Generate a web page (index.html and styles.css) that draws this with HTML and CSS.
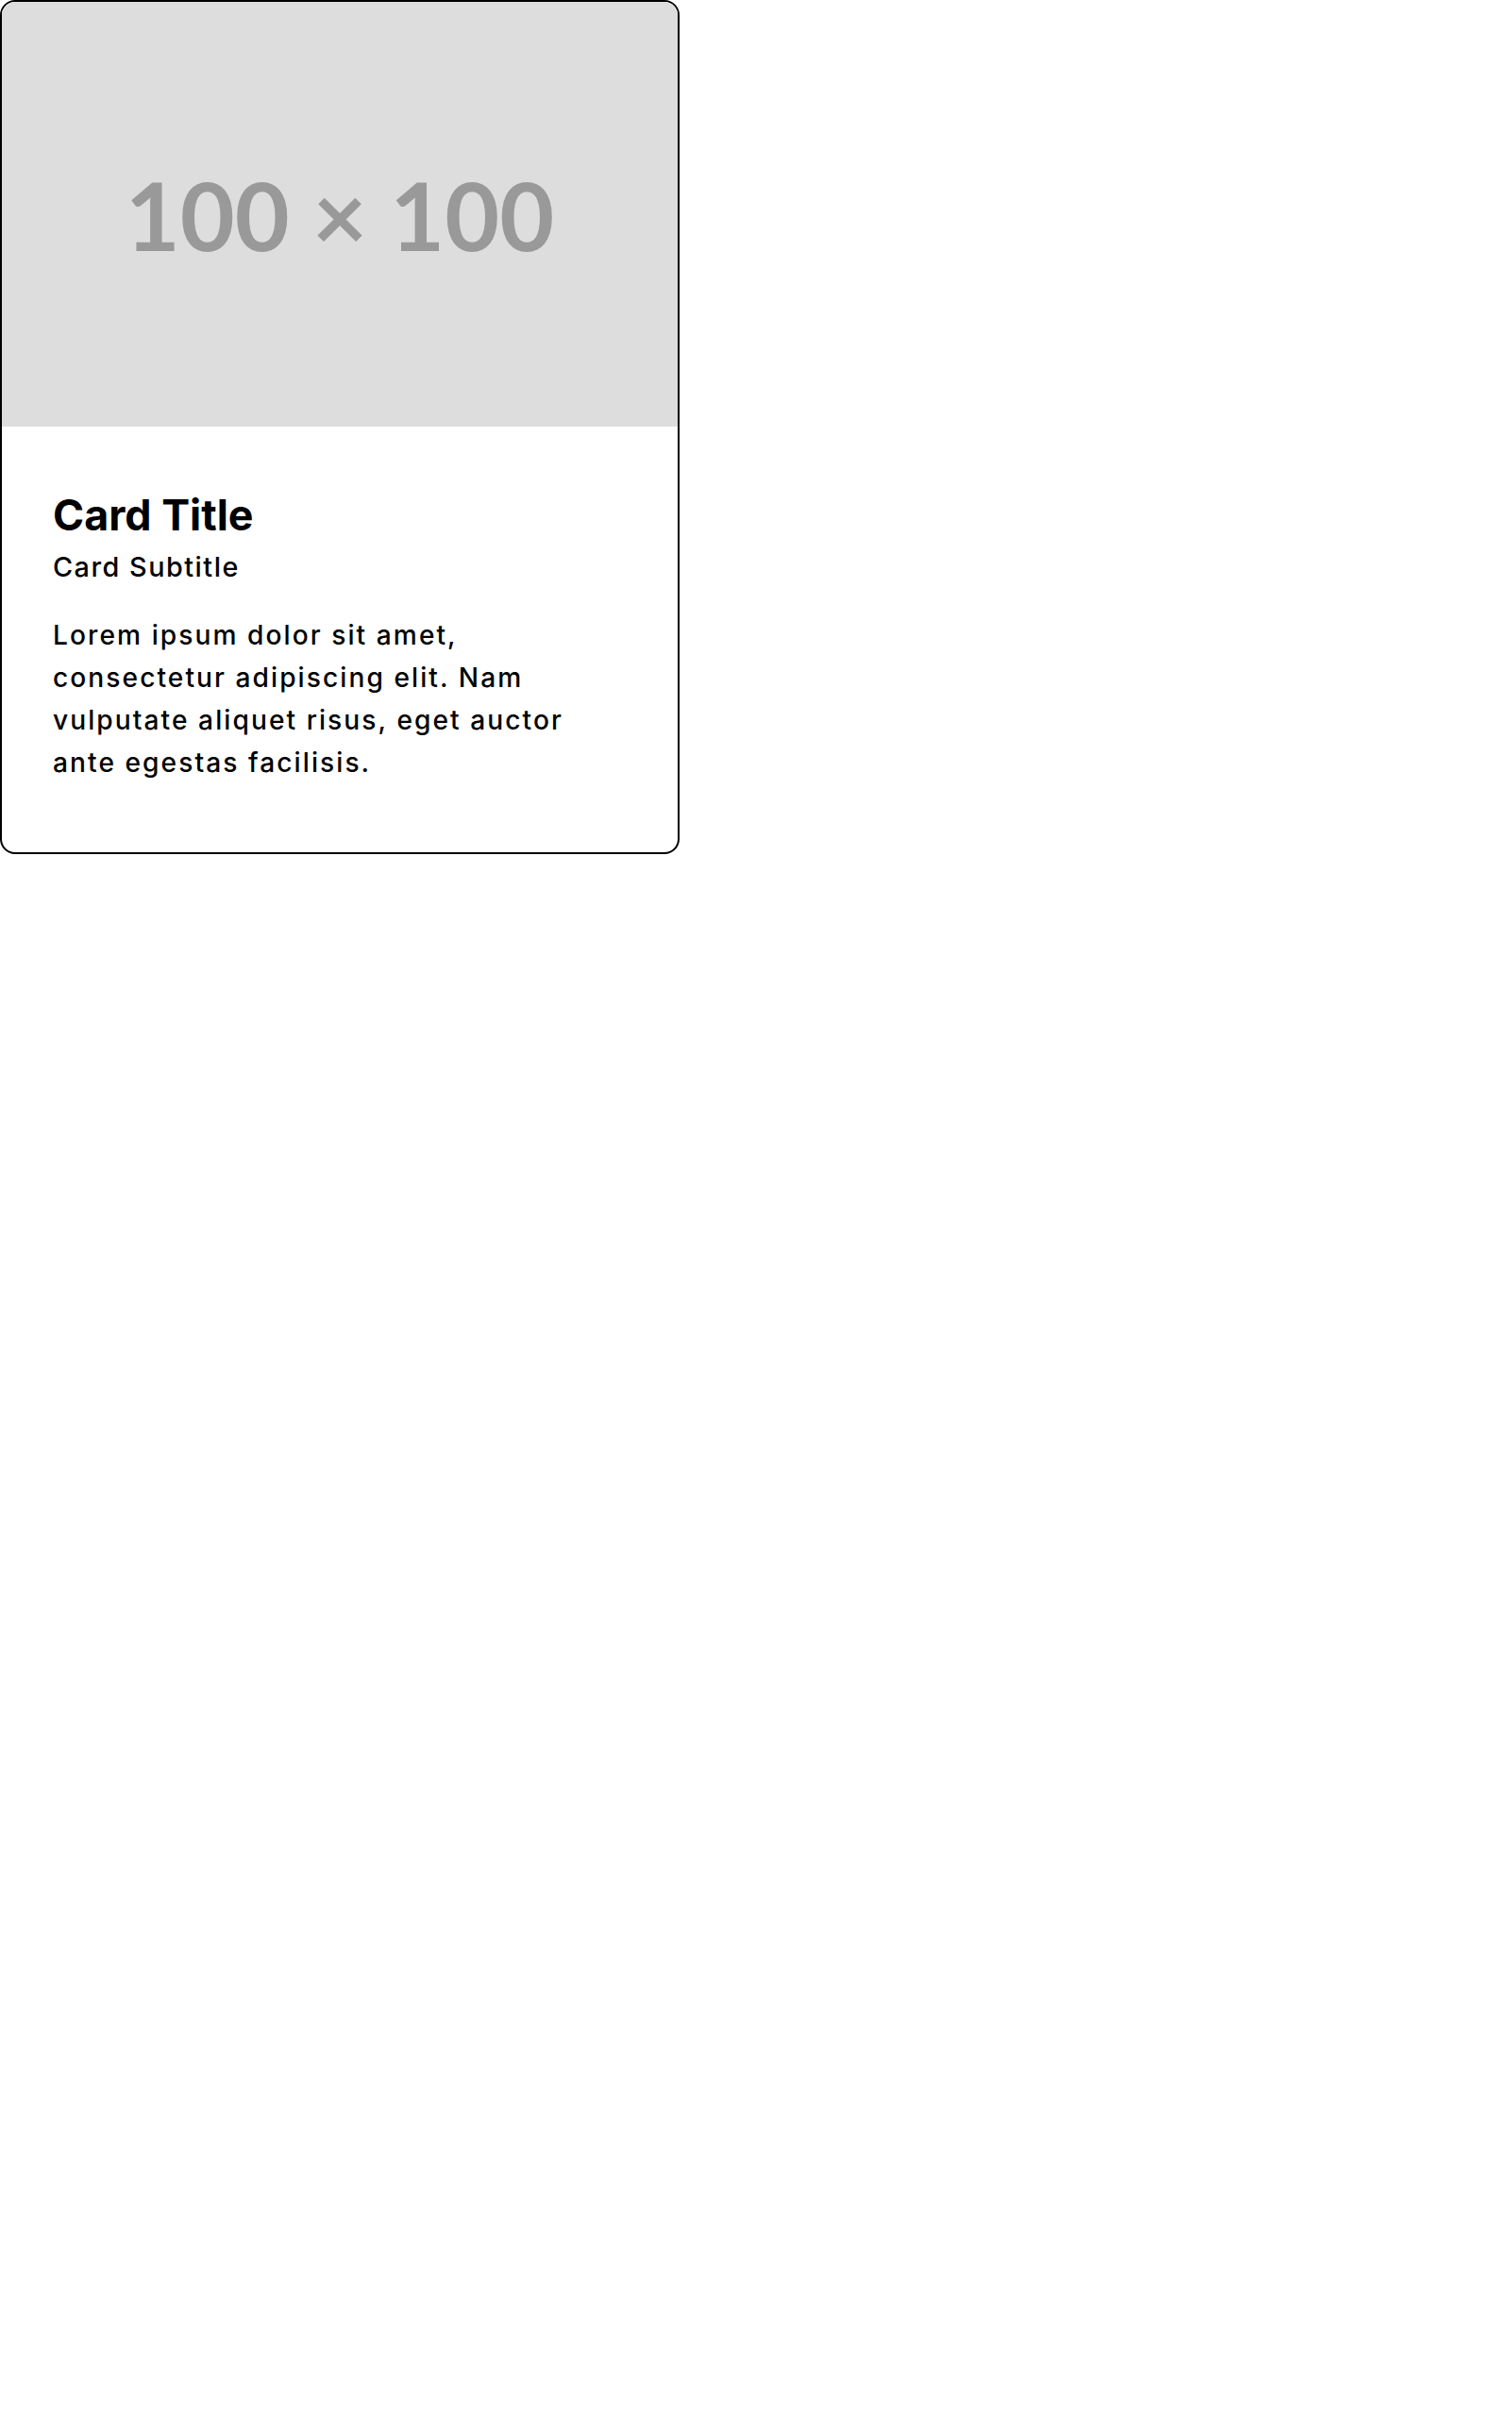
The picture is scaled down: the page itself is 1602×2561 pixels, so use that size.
FILE: index.html
```html
<!DOCTYPE html>
<html lang="en">
<head>
<meta charset="utf-8">
<title>Card</title>
<link rel="stylesheet" href="styles.css">
</head>
<body>
<article class="card">
  <div class="card-media">
    <span class="media-label">100 × 100</span>
  </div>
  <div class="card-body">
    <h2 class="card-title">Card Title</h2>
    <p class="card-subtitle">Card Subtitle</p>
    <p class="card-text">Lorem ipsum dolor sit amet, consectetur adipiscing elit. Nam vulputate aliquet risus, eget auctor ante egestas facilisis.</p>
  </div>
</article>
</body>
</html>
```

FILE: styles.css
```css
html, body {
  margin: 0;
  padding: 0;
  background: #ffffff;
}

body {
  font-family: Inter, "Noto Sans", sans-serif;
  color: #000000;
}

.card {
  box-sizing: border-box;
  width: 720px;
  border: 2px solid #000000;
  border-radius: 16px;
  overflow: hidden;
  background: #ffffff;
}

.card-media {
  height: 450px;
  background: #dddddd;
  display: flex;
  align-items: center;
  justify-content: center;
}

.media-label {
  font-family: Lato, sans-serif;
  font-weight: 700;
  font-size: 100px;
  color: #999999;
  line-height: 1;
}

.card-body {
  padding: 68px 54px 72px;
  display: flex;
  flex-direction: column;
}

.card-title {
  margin: 0;
  font-size: 44.8px;
  font-weight: 700;
  line-height: 1.2;
}

.card-subtitle {
  margin: 5px 0 0;
  font-size: 28.8px;
  font-weight: 500;
  line-height: 1.5;
  letter-spacing: 1.5px;
}

.card-text {
  margin: 29px 0 0;
  max-width: 575px;
  font-size: 28.16px;
  font-weight: 500;
  line-height: 1.6;
  letter-spacing: 2.05px;
}
```
